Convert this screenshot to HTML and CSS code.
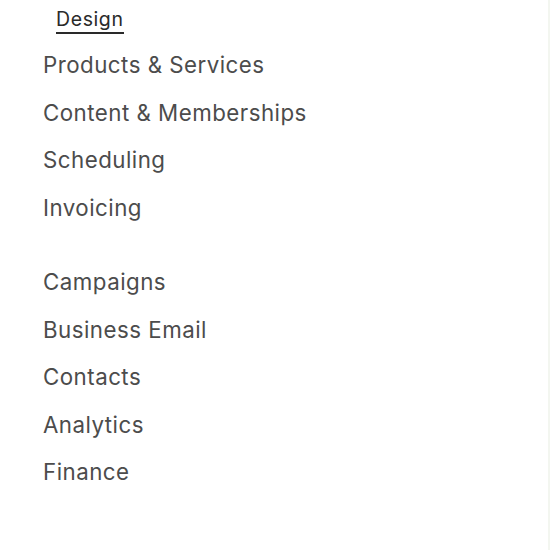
FILE: index.html
```html
<!DOCTYPE html>
<html lang="en">
<head>
    <meta charset="UTF-8">
    <meta name="viewport" content="width=device-width, initial-scale=1.0">
    <title>Menu</title>
    <link rel="stylesheet" href="styles.css">
</head>
<body>
    <nav class="menu">
        <div class="sub-item"><span class="active">Design</span></div>

        <ul class="group">
            <li>Products &amp; Services</li>
            <li>Content &amp; Memberships</li>
            <li>Scheduling</li>
            <li>Invoicing</li>
        </ul>

        <ul class="group">
            <li>Campaigns</li>
            <li>Business Email</li>
            <li>Contacts</li>
            <li>Analytics</li>
            <li>Finance</li>
        </ul>
    </nav>
</body>
</html>
```

FILE: styles.css
```css
body {
    font-family: Inter, "Noto Sans", sans-serif;
    margin: 0;
    padding: 0;
    background-color: #fff;
    height: 100vh;
}

.menu {
    height: 100%;
    padding-top: 7px;
    padding-left: 43px;
    box-sizing: border-box;
    border-right: 2px solid #f3f6f0;
}

.sub-item {
    padding-left: 13px;
    font-size: 19.5px;
    letter-spacing: 0.6px;
    line-height: 24px;
    color: #2a2a2a;
    margin-bottom: 7px;
}

.active {
    display: inline-block;
    padding-bottom: 1px;
    border-bottom: 2px solid #2a2a2a;
}

.group {
    list-style: none;
    margin: 0;
    padding: 0;
}

.group + .group {
    margin-top: 27px;
}

.group li {
    font-size: 22.3px;
    letter-spacing: 0.48px;
    line-height: 47.5px;
    color: #4c4c4c;
}
```
